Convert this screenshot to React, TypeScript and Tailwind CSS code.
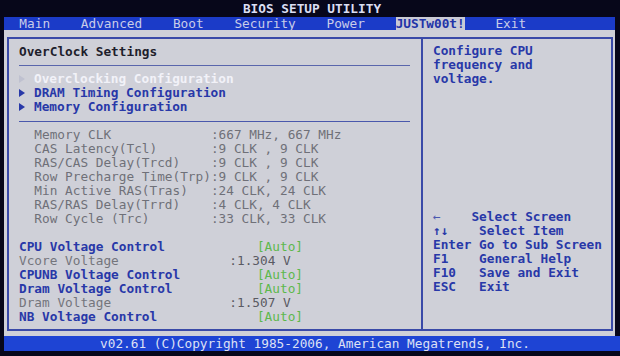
import React from "react";

const memoryRows = [
  ["Memory CLK", ":667 MHz, 667 MHz"],
  ["CAS Latency(Tcl)", ":9 CLK , 9 CLK"],
  ["RAS/CAS Delay(Trcd)", ":9 CLK , 9 CLK"],
  ["Row Precharge Time(Trp)", ":9 CLK , 9 CLK"],
  ["Min Active RAS(Tras)", ":24 CLK, 24 CLK"],
  ["RAS/RAS Delay(Trrd)", ":4 CLK, 4 CLK"],
  ["Row Cycle (Trc)", ":33 CLK, 33 CLK"],
];

// control = blue + [Auto], otherwise gray readout
const voltageRows = [
  { label: "CPU Voltage Control", control: true, value: "" },
  { label: "Vcore Voltage", control: false, value: ":1.304 V" },
  { label: "CPUNB Voltage Control", control: true, value: "" },
  { label: "Dram Voltage Control", control: true, value: "" },
  { label: "Dram Voltage", control: false, value: ":1.507 V" },
  { label: "NB Voltage Control", control: true, value: "" },
];

const keyHelp = [
  ["←", "    Select Screen"],
  ["↑↓", "    Select Item"],
  ["Enter", " Go to Sub Screen"],
  ["F1", "    General Help"],
  ["F10", "   Save and Exit"],
  ["ESC", "   Exit"],
];

const tabs = [
  { name: "Main", col: 2 },
  { name: "Advanced", col: 10 },
  { name: "Boot", col: 22 },
  { name: "Security", col: 30 },
  { name: "Power", col: 42 },
  { name: "JUSTw00t!", col: 51 },
  { name: "Exit", col: 64 },
];

const Arrow = ({ color }: { color: string }) => (
  <svg width="6" height="8" viewBox="0 0 6 8" className="inline-block mr-[9px] mb-[1px]">
    <path d="M0 0 L6 4 L0 8 Z" fill={color} />
  </svg>
);

const MenuBar = () => {
  // build a fixed 80-col style line, pad with spaces between tabs
  let pos = 0;
  return (
    <div className="ml-[4px] mr-[5px] h-[13px] bg-[#1b3bc8] flex items-center whitespace-pre leading-[13px] text-[#c9cde8]">
      {tabs.map((t) => {
        const pad = " ".repeat(t.col - pos);
        pos = t.col + t.name.length;
        const active = t.name === "JUSTw00t!";
        return (
          <React.Fragment key={t.name}>
            <span>{pad}</span>
            <span className={active ? "bg-[#c9cad6] text-[#2233a8] font-bold" : ""}>{t.name}</span>
          </React.Fragment>
        );
      })}
    </div>
  );
};

const App = () => {
  return (
    <div className="w-[620px] h-[356px] bg-[#07071a] flex flex-col overflow-hidden font-['DejaVu_Sans_Mono','Liberation_Mono',monospace] text-[12.75px] leading-[14px]">
      <div className="h-[17px] flex items-center justify-center font-bold text-[#dadef2] pl-[4px]">
        BIOS SETUP UTILITY
      </div>

      <MenuBar />

      <div className="ml-[4px] mr-[5px] h-[306px] bg-[#cfd0d8] pt-[7px] pl-[3px] pr-[2px] pb-[5px]">
        <div className="h-full flex border-2 border-[#3a4aa8]">
          {/* left panel */}
          <div className="w-[414px] border-r-2 border-[#3a4aa8] pt-[6px] pl-[10px] pr-[11px]">
            <div className="font-bold text-[#1e1e2c]">OverClock Settings</div>
            <div className="mt-[6px] h-px bg-[#5a66ac]" />

            <div className="mt-[6px] font-bold">
              <div className="text-[#f2f2f8]">
                <Arrow color="#bfc1d0" />
                Overclocking Configuration
              </div>
              <div className="text-[#2838a8]">
                <Arrow color="#2838a8" />
                DRAM Timing Configuration
              </div>
              <div className="text-[#2838a8]">
                <Arrow color="#2838a8" />
                Memory Configuration
              </div>
            </div>

            <div className="mt-[7px] h-px bg-[#4a58ac]" />

            <div className="mt-[6px] pl-[2ch] text-[#6f7078]">
              {memoryRows.map(([label, value]) => (
                <div key={label} className="flex whitespace-pre">
                  <span className="w-[23ch]">{label}</span>
                  <span>{value}</span>
                </div>
              ))}
            </div>

            <div className="mt-[14px]">
              {voltageRows.map((r) => (
                <div key={r.label} className="flex whitespace-pre">
                  <span className={`w-[27.4ch] ${r.control ? "font-bold text-[#2838a8]" : "text-[#74757c]"}`}>
                    {r.label}
                  </span>
                  {r.control ? (
                    <span className="pl-[3.6ch] text-[#5cb84c]">[Auto]</span>
                  ) : (
                    <span className="text-[#5a5a62]">{r.value}</span>
                  )}
                </div>
              ))}
            </div>
          </div>

          {/* right panel */}
          <div className="flex-1 pt-[5px] pl-[10px] font-bold text-[#2838a8]">
            <div>Configure CPU</div>
            <div>frequency and</div>
            <div>voltage.</div>

            <div className="mt-[124px]">
              {keyHelp.map(([k, desc]) => (
                <div key={k} className="whitespace-pre">
                  <span className={k === "←" ? "font-normal text-[#4a58b0]" : ""}>{k}</span>
                  <span>{desc}</span>
                </div>
              ))}
            </div>
          </div>
        </div>
      </div>

      <div className="ml-[4px] h-[15px] bg-[#1e44d4] flex items-center justify-center text-[#dde0f4] pl-[6px] leading-[15px]">
        v02.61 (C)Copyright 1985-2006, American Megatrends, Inc.
      </div>
      <div className="flex-1" />
    </div>
  );
};

export default App;
